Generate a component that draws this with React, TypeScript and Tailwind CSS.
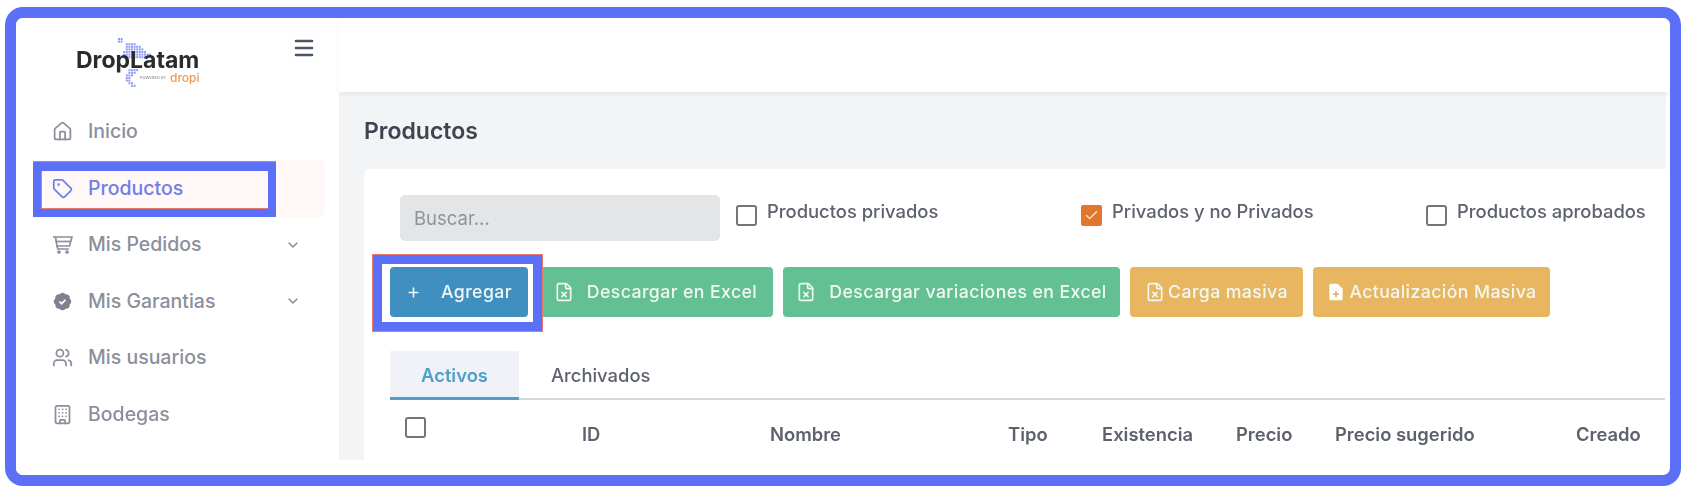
import { Check, ChevronDown, FileX, Home, Menu, Plus, Tag, Users, Building } from 'lucide-react';
import type { ReactNode } from 'react';

const FONT = "font-['Inter',sans-serif]";

// dots of the map behind the logo: [row, first column, last column]
const MAP_ROWS = [
  [0, 0, 1],
  [1, 0, 1],
  [2, 3, 6],
  [3, 3, 8],
  [4, 3, 9],
  [5, 2, 10],
  [6, 2, 12],
  [7, 2, 13],
  [12, 4, 7],
  [13, 4, 6],
  [14, 3, 5],
  [15, 3, 4],
  [16, 3, 4],
  [17, 4, 5],
  [18, 5, 6],
];

function CartIcon() {
  return (
    <svg width="21" height="21" viewBox="0 0 21 21" fill="none" stroke="currentColor" strokeWidth="1.7">
      <path d="M1 3h19l-2.5 9H5L3.5 3" />
      <path d="M3.5 7.5h15" />
      <path d="M5 12l.8 3h11" />
      <circle cx="7" cy="18" r="1" fill="currentColor" />
      <circle cx="15" cy="18" r="1" fill="currentColor" />
    </svg>
  );
}

function GuaranteeIcon() {
  return (
    <svg width="21" height="21" viewBox="0 0 24 24">
      <path
        fill="#7e828e"
        d="M3.85 8.62a4 4 0 0 1 4.78-4.77 4 4 0 0 1 6.74 0 4 4 0 0 1 4.78 4.78 4 4 0 0 1 0 6.74 4 4 0 0 1-4.77 4.78 4 4 0 0 1-6.75 0 4 4 0 0 1-4.78-4.77 4 4 0 0 1 0-6.76Z"
      />
      <path d="m8.5 12 2.5 2.5 4.5-4.5" fill="none" stroke="#fff" strokeWidth="2" />
    </svg>
  );
}

function FilePlusIcon() {
  return (
    <svg width="20" height="20" viewBox="0 0 24 24">
      <path fill="#fff" d="M6 2h8l6 6v12a2 2 0 0 1-2 2H6a2 2 0 0 1-2-2V4a2 2 0 0 1 2-2Z" />
      <path d="M12 11v7M8.5 14.5h7" stroke="#e8b561" strokeWidth="2.2" />
    </svg>
  );
}

function NavItem({
  icon,
  label,
  active,
  arrow,
}: {
  icon: ReactNode;
  label: string;
  active?: boolean;
  arrow?: boolean;
}) {
  return (
    <div
      className={`flex h-[56.5px] items-center rounded-md pl-[20px] pr-[24px] ${
        active ? 'bg-[#fff8f7] text-[#6f7fe8]' : 'text-[#8b8f9c]'
      }`}
    >
      <span className="flex w-[36px] shrink-0 items-center">{icon}</span>
      <span className="flex-1 text-[19.5px] font-medium">{label}</span>
      {arrow && <ChevronDown size={16} className="text-[#80848f]" />}
    </div>
  );
}

function Logo() {
  return (
    <div className="relative ml-[42px] h-[60px] w-[124px]">
      <svg width="40" height="50" viewBox="0 0 40 50" className="absolute top-[2px] left-[42px] text-[#8f9df2]">
        {MAP_ROWS.flatMap(([row, from, to]) =>
          Array.from({ length: to - from + 1 }, (_, i) => (
            <rect key={`${row}-${i}`} x={(from + i) * 2.6} y={row * 2.6} width="2" height="2" fill="currentColor" />
          )),
        )}
      </svg>
      <div className="absolute top-[14px] left-0 text-[23px] leading-[20px] font-bold text-[#2b2b2b]">DropLatam</div>
      <div className="absolute top-[35px] left-[94px] text-[12px] leading-[14px] font-medium text-[#f0964f]">dropi</div>
      <div className="absolute top-[39px] left-[64px] text-[4px] leading-[6px] whitespace-nowrap text-[#777]">POWERED BY</div>
    </div>
  );
}

function Sidebar() {
  return (
    <aside className="w-[323px] shrink-0 bg-white pr-[14px]">
      <div className="flex h-[85.5px] justify-between pt-[18px] pr-[9px] pl-[18px]">
        <Logo />
        <Menu size={24} strokeWidth={2.6} className="text-[#4b5563]" />
      </div>
      <nav className="pl-[16px]">
        <NavItem icon={<Home size={21} />} label="Inicio" />
        <NavItem icon={<Tag size={21} />} label="Productos" active />
        <NavItem icon={<CartIcon />} label="Mis Pedidos" arrow />
        <NavItem icon={<GuaranteeIcon />} label="Mis Garantias" arrow />
        <NavItem icon={<Users size={21} />} label="Mis usuarios" />
        <NavItem icon={<Building size={21} />} label="Bodegas" />
      </nav>
    </aside>
  );
}

function Btn({
  className,
  icon,
  label,
  gap,
}: {
  className: string;
  icon: ReactNode;
  label: string;
  gap: string;
}) {
  return (
    <button
      className={`flex h-[50px] items-center justify-center rounded-[4px] text-[17.7px] font-medium tracking-[0.4px] whitespace-nowrap text-[#f1f8f4] ${gap} ${className}`}
    >
      {icon}
      {label}
    </button>
  );
}

function Box() {
  return <span className="block size-[21px] rounded-[3px] border-[2.5px] border-[#757575] bg-white" />;
}

function Filter({ label, children, className }: { label: string; children: ReactNode; className: string }) {
  return (
    <div className={`flex items-start gap-[10px] ${className}`}>
      <span className="mt-[10px]">{children}</span>
      <span className="text-[18.4px] leading-[32px] font-medium text-[#5d626d]">{label}</span>
    </div>
  );
}

function Products() {
  const cols = [
    ['ID', 'w-[188px]'],
    ['Nombre', 'w-[238px]'],
    ['Tipo', 'w-[94px]'],
    ['Existencia', 'w-[134px]'],
    ['Precio', 'w-[99px]'],
    ['Precio sugerido', 'w-[241px]'],
    ['Creado', ''],
  ];
  return (
    <main className="flex min-w-0 flex-1 flex-col">
      <header className="relative z-10 h-[74px] shrink-0 bg-white shadow-[0_3px_4px_rgba(0,0,0,0.05)]" />
      <div className="mr-[4px] h-[368px] overflow-hidden bg-[#f3f4f6] pl-[25px]">
        <h1 className="pt-[23px] text-[23px] leading-[32px] font-semibold text-[#3f4450]">Productos</h1>
        <section className="mt-[22px] h-[300px] rounded-l-md bg-white pl-[26px]">
          <div className="flex pt-[26px] pl-[10px]">
            <div className="flex h-[46px] w-[320px] items-center rounded-[5px] bg-[#e4e5e7] pt-[2px] pl-[14px] text-[18.5px] text-[#8f929b]">
              Buscar...
            </div>
            <Filter label="Productos privados" className="ml-[16px] w-[345px]">
              <Box />
            </Filter>
            <Filter label="Privados y no Privados" className="w-[345px]">
              <span className="flex size-[21px] items-center justify-center rounded-[2px] bg-[#e2762e]">
                <Check size={15} strokeWidth={2} className="text-[#fde8d8]" />
              </span>
            </Filter>
            <Filter label="Productos aprobados" className="whitespace-nowrap">
              <Box />
            </Filter>
          </div>
          <div className="mt-[26px] flex gap-[10px]">
            <Btn className="w-[138px] bg-[#3f8fc0]" gap="gap-[20px]" icon={<Plus size={15} strokeWidth={2.5} />} label="Agregar" />
            <Btn className="w-[235px] bg-[#63c092]" gap="gap-[13px]" icon={<FileX size={20} />} label="Descargar en Excel" />
            <Btn className="w-[337px] bg-[#63c092]" gap="gap-[13px]" icon={<FileX size={20} />} label="Descargar variaciones en Excel" />
            <Btn className="w-[173px] bg-[#e8b561]" gap="gap-[3px]" icon={<FileX size={20} />} label="Carga masiva" />
            <Btn className="w-[237px] bg-[#e8b561]" gap="gap-[3px]" icon={<FilePlusIcon />} label="Actualización Masiva" />
          </div>
          <div className="mt-[34px] mr-[1px] flex h-[49px] border-b-2 border-[#d5d7dd] text-[18.4px]">
            <div className="-mb-[2px] flex w-[129px] items-center justify-center border-b-[3px] border-[#4f9fc9] bg-[#f0f2f7] pt-[3px] font-semibold text-[#4f9fc9]">
              Activos
            </div>
            <div className="flex items-center pt-[3px] pl-[32px] font-medium text-[#5d626d]">Archivados</div>
          </div>
          <div className="flex pt-[17px] pl-[15px]">
            <Box />
            <div className="ml-[156px] flex pt-[5px] text-[18.4px] leading-[24px] font-semibold text-[#5d626d]">
              {cols.map(([name, w]) => (
                <div key={name} className={w}>
                  {name}
                </div>
              ))}
            </div>
          </div>
        </section>
      </div>
    </main>
  );
}

export default function App() {
  return (
    <div className={`h-[496px] w-[1688px] overflow-hidden bg-white pt-[7px] pl-[5px] ${FONT}`}>
      <div className="relative h-[479px] w-[1676px] overflow-hidden rounded-[18px] border-[11px] border-[#5b70f6] bg-white">
        <div className="flex h-full blur-[0.7px]">
          <Sidebar />
          <Products />
        </div>
        {/* the two highlight boxes drawn on top of the screenshot */}
        <div className="absolute top-[144px] left-[17px] h-[55px] w-[243px] border-x-[8px] border-t-[9px] border-b-[8px] border-[#5b70f6] shadow-[inset_1px_0_0_#e8796b,inset_0_-1px_0_#e8796b,0_-1px_0_#e8796b]" />
        <div className="absolute top-[237px] left-[357px] h-[76px] w-[169px] border-[9px] border-[#5b70f6] shadow-[0_0_0_1px_#e8796b]" />
      </div>
    </div>
  );
}
